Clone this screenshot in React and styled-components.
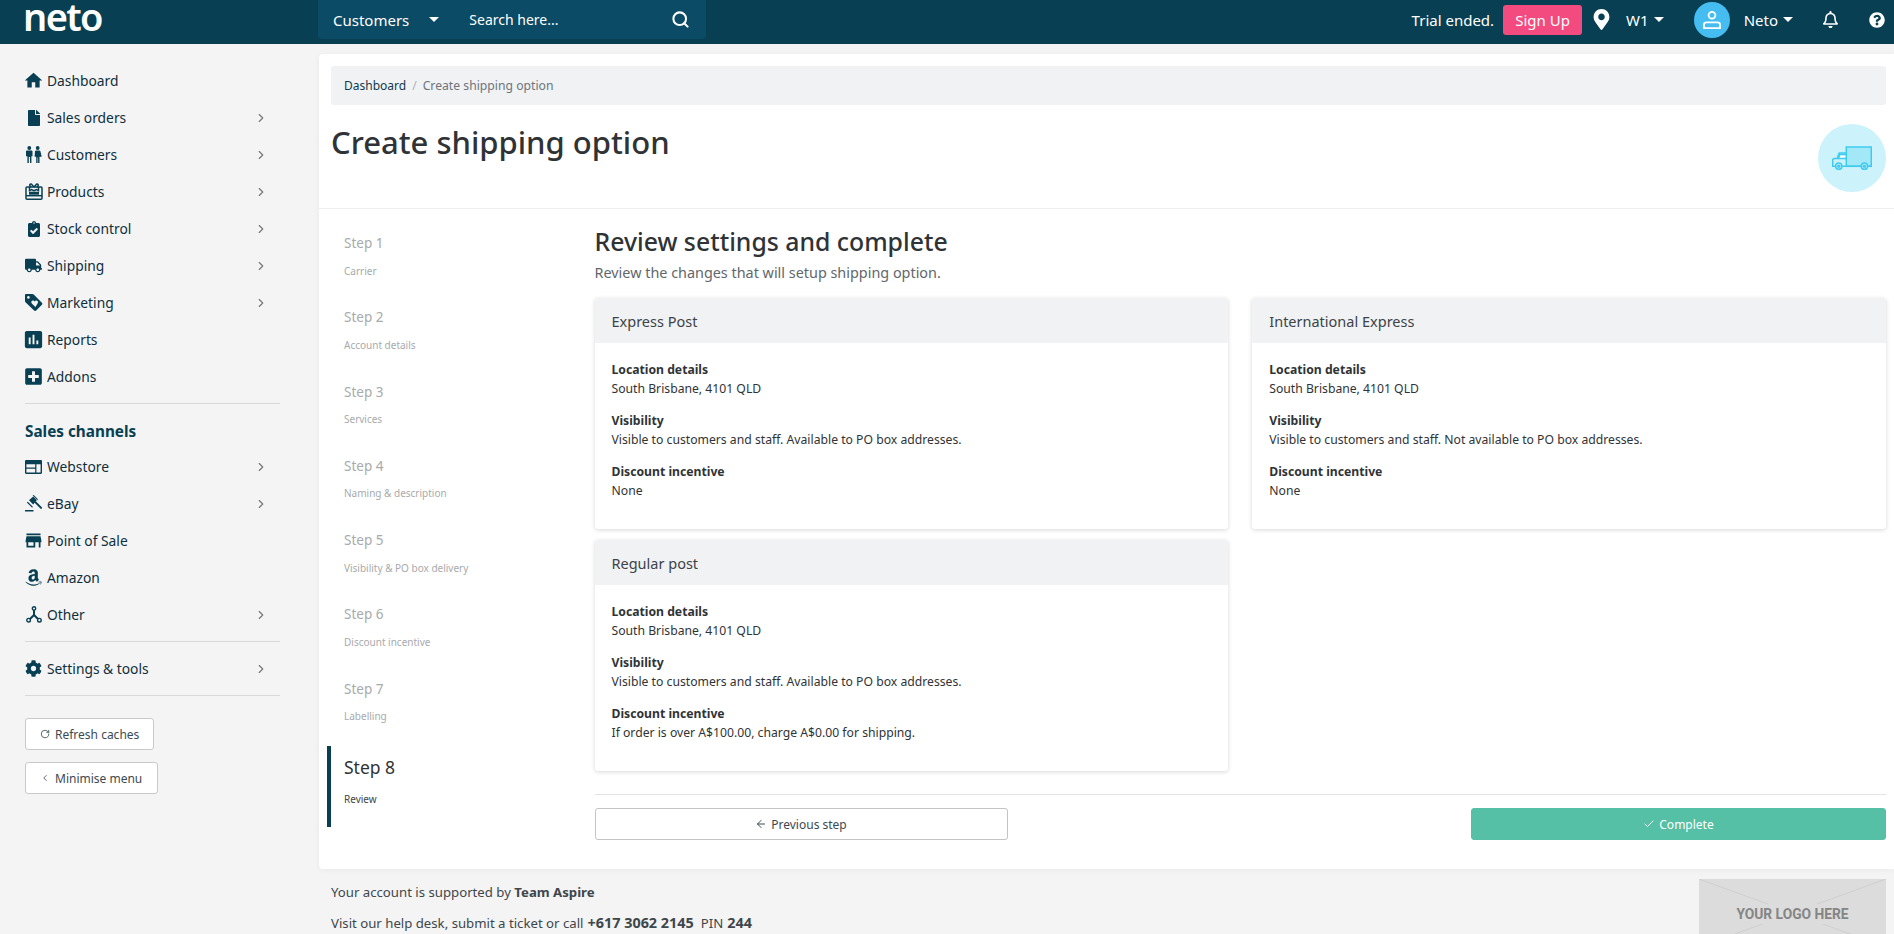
import React from "react";
import styled, { createGlobalStyle } from "styled-components";
import { FaFile, FaClipboardCheck, FaTruck, FaPlusSquare, FaAmazon, FaCog, FaMapMarkerAlt, FaRegBell, FaQuestionCircle } from "react-icons/fa";
import { MdAssessment, MdStore, MdHome } from "react-icons/md";
import { ChevronRight, ChevronLeft, Search, ArrowLeft, Check, RotateCw } from "lucide-react";

const GlobalStyle = createGlobalStyle`
  html, body {
    margin: 0;
    height: 100%;
    overflow: hidden;
    background: #f4f4f5;
    font-family: "Noto Sans", "Open Sans", sans-serif;
    color: #2f3336;
  }
  * { box-sizing: border-box; }
`;

const TopBar = styled.header`
  height: 44px;
  background: #083f53;
  color: #fff;
  display: flex;
  align-items: flex-start;
`;

const LogoBox = styled.div`
  width: 318px;
  padding-left: 23px;
  font-size: 38px;
  line-height: 33px;
  font-weight: 600;
  letter-spacing: -1.6px;
`;

const SearchBox = styled.div`
  width: 388px;
  height: 39px;
  background: #0b4b65;
  border-radius: 0 0 4px 4px;
  display: flex;
  align-items: center;
  padding: 0 16px 0 15px;
  font-size: 15px;
`;

const Caret = styled.span`
  display: inline-block;
  width: 0;
  height: 0;
  border-left: 5px solid transparent;
  border-right: 5px solid transparent;
  border-top: 5px solid #fff;
  margin-left: ${(p) => p.$gap || 5}px;
`;

const SearchHint = styled.span`
  margin-left: 30px;
  flex: 1;
  font-size: 14px;
`;

const SearchIcon = styled(Search)`
  stroke-width: 2.6;
`;

const TopRight = styled.div`
  margin-left: auto;
  height: 39px;
  display: flex;
  align-items: center;
  padding-right: 9px;
  font-size: 15px;
`;

const SignUp = styled.span`
  background: #f34b7f;
  border-radius: 3px;
  width: 79px;
  height: 30px;
  margin: 0 9px 0 9px;
  display: flex;
  align-items: center;
  justify-content: center;
`;

const Avatar = styled.span`
  width: 36px;
  height: 36px;
  border-radius: 50%;
  background: #45bdf0;
  margin: 0 14px 0 30px;
  display: flex;
  align-items: center;
  justify-content: center;
`;

const TopIcon = styled.span`
  display: flex;
  font-size: ${(p) => p.$size}px;
  margin: ${(p) => p.$margin};
`;

const Layout = styled.div`
  display: flex;
  align-items: flex-start;
`;

const Sidebar = styled.aside`
  width: 319px;
  flex: none;
  padding: 18px 39px 0 25px;
`;

const NavItem = styled.div`
  height: 37px;
  display: flex;
  align-items: center;
  font-size: 13.8px;
  color: #0f2f3c;
  padding-right: 12px;
`;

const NavIcon = styled.span`
  width: 17px;
  margin-right: 5px;
  color: #083f53;
  font-size: 17px;
  display: flex;
  justify-content: center;
  flex: none;

  svg {
    flex: none;
  }
`;

const NavLabel = styled.span`
  flex: 1;
`;

const Arrow = styled(ChevronRight)`
  color: #777;
`;

const SideRule = styled.hr`
  border: 0;
  border-top: 1px solid #d9d9d9;
  margin: ${(p) => p.$margin};
`;

const SideHeading = styled.div`
  font-size: 15.3px;
  line-height: 20px;
  font-weight: 700;
  color: #083f53;
  margin-bottom: 7px;
`;

const SideButton = styled.div`
  width: ${(p) => p.$width}px;
  height: 32px;
  margin-bottom: 12px;
  background: #fff;
  border: 1px solid #c9c9c9;
  border-radius: 3px;
  font-size: 12px;
  color: #3b4a52;
  display: flex;
  align-items: center;
  padding-left: 14px;
  gap: 5px;
`;

const Main = styled.main`
  flex: 1;
  min-width: 0;
  padding-top: 10px;
`;

const Panel = styled.div`
  background: #fff;
  border-radius: 4px 0 0 4px;
  box-shadow: 0 1px 6px rgba(0, 0, 0, 0.05);
  padding-bottom: 29px;
`;

const PanelHead = styled.div`
  padding: 12px 8px 16px 12px;
  border-bottom: 1px solid #eee;
`;

const Breadcrumb = styled.div`
  height: 39px;
  background: #f1f2f4;
  border-radius: 3px;
  padding: 0 13px;
  display: flex;
  align-items: center;
  font-size: 12.2px;
  color: #6c757d;
`;

const CrumbLink = styled.span`
  color: #0f3a4c;
  font-size: 12px;
`;

const CrumbSep = styled.span`
  margin: 0 6px;
  color: #adb2b7;
`;

const TitleRow = styled.div`
  margin-top: 19px;
  display: flex;
  justify-content: space-between;
`;

const PageTitle = styled.h1`
  margin: 0;
  font-size: 31px;
  line-height: 37px;
  font-weight: 500;
  color: #2f3336;
`;

const TruckBadge = styled.div`
  width: 68px;
  height: 68px;
  border-radius: 50%;
  background: #ccf2fb;
  display: flex;
  align-items: center;
  justify-content: center;
`;

const PanelBody = styled.div`
  display: flex;
  padding: 16px 8px 0 8px;
`;

const StepList = styled.div`
  width: 267.5px;
  flex: none;
`;

const Step = styled.div`
  border-left: 4px solid ${(p) => (p.$active ? "#083f53" : "transparent")};
  padding: ${(p) => (p.$active ? "9px 0 21px 13px" : "8px 0 21.8px 13px")};
  margin-top: ${(p) => (p.$active ? "1px" : "0")};
  width: ${(p) => (p.$active ? "200px" : "auto")};
`;

const StepName = styled.div`
  font-size: ${(p) => (p.$active ? 17.5 : 13.5)}px;
  line-height: ${(p) => (p.$active ? 24 : 20)}px;
  color: ${(p) => (p.$active ? "#2f3336" : "#a8aaac")};
`;

const StepNote = styled.div`
  font-size: 10px;
  line-height: 14px;
  margin-top: ${(p) => (p.$active ? 13 : 10.5)}px;
  color: ${(p) => (p.$active ? "#444" : "#a8aaac")};
`;

const Review = styled.div`
  flex: 1;
  min-width: 0;
`;

const ReviewTitle = styled.h2`
  margin: 0;
  font-size: 24.8px;
  line-height: 32px;
  font-weight: 500;
  color: #2f3336;
`;

const ReviewNote = styled.p`
  margin: 6px 0 15px;
  font-size: 14.4px;
  line-height: 20px;
  color: #62676b;
`;

const CardGrid = styled.div`
  display: grid;
  grid-template-columns: 1fr 1fr;
  gap: 11px 24px;
  align-items: start;
`;

const Card = styled.section`
  border-radius: 3px;
  box-shadow: 0 1px 4px rgba(0, 0, 0, 0.16);
  background: #fff;
`;

const CardHead = styled.div`
  height: 45px;
  background: #f1f2f4;
  border-radius: 3px 3px 0 0;
  padding: 0 17px;
  display: flex;
  align-items: center;
  font-size: 14.5px;
  color: #3d4347;
`;

const CardBody = styled.div`
  padding: 17px 17px 29px;
  font-size: 12.2px;
  line-height: 19px;
  color: #2f3336;
`;

const Fact = styled.div`
  & + & {
    margin-top: 13px;
  }
`;

const FactName = styled.div`
  font-weight: 700;
`;

const Actions = styled.div`
  margin-top: 23px;
  padding-top: 13px;
  border-top: 1px solid #e4e4e4;
  display: flex;
  justify-content: space-between;
`;

const ActionButton = styled.div`
  width: ${(p) => p.$width}px;
  height: 32px;
  border-radius: 3px;
  font-size: 12px;
  display: flex;
  align-items: center;
  justify-content: center;
  gap: 4px;
  background: ${(p) => (p.$primary ? "#55c0a6" : "#fff")};
  color: ${(p) => (p.$primary ? "#fff" : "#3b4a52")};
  border: 1px solid ${(p) => (p.$primary ? "#55c0a6" : "#c4c4c4")};
`;

const Footer = styled.footer`
  display: flex;
  justify-content: space-between;
  align-items: flex-start;
  padding: 10px 8px 0 12px;
  font-size: 13.2px;
  line-height: 20px;
  color: #40464a;
`;

const FooterText = styled.div`
  padding-top: 3px;
`;

const FooterLine = styled.div`
  & + & {
    margin-top: 11px;
  }
`;

const PhoneText = styled.b`
  font-size: 14.4px;
  margin-left: 4px;
`;

const PinLabel = styled.span`
  margin-left: 7px;
`;

const LogoSlot = styled.div`
  width: 187px;
  height: 68px;
  background: #dcdcdc;
  color: #858585;
  font-family: "Roboto", sans-serif;
  font-weight: 700;
  font-size: 13.8px;
  position: relative;
  display: flex;
  justify-content: center;
  padding-top: 25px;
  overflow: hidden;
`;

const LogoCross = styled.svg`
  position: absolute;
  inset: 0;
`;

const LogoWord = styled.span`
  position: relative;
  background: #dcdcdc;
  padding: 0 3px;
  height: 20px;
`;

const CustomersIcon = () => (
  <svg width="17" height="17" viewBox="0 0 17 17" fill="currentColor">
    <circle cx="4.3" cy="2" r="1.9" />
    <circle cx="12.7" cy="2" r="1.9" />
    <path d="M2 4.6h4.6c.6 0 .9.4.9 1v4.6H6.4V17H5V11H3.8v6H2.4v-6.8H1V5.6c0-.6.4-1 1-1z" />
    <path d="M11 4.6h3.4c.5 0 .8.3 1 .7l1.3 5.4h-2.2V17h-1.4v-5.5h-.5V17h-1.4v-6.3H9.6l.4-5.4c.2-.4.5-.7 1-.7z" />
  </svg>
);

const ProductsIcon = () => (
  <svg width="18" height="17" viewBox="0 0 18 17" fill="none" stroke="currentColor" strokeWidth="1.5">
    <rect x="1" y="4" width="16" height="12.2" rx="1" />
    <path d="M1 12.7h16" />
    <path d="M9 4L6.6 1.2C5.4.4 4.3 1.7 5 2.9L6.2 4M9 4l2.4-2.8c1.2-.8 2.3.5 1.6 1.7L11.8 4" />
    <path d="M4.5 4v3.6l2-1 2.5 1 2.5-1 2 1V4" />
    <path d="M4 10.2h10" strokeWidth="3" />
  </svg>
);

const MarketingIcon = () => (
  <svg width="18" height="17" viewBox="0 0 18 17">
    <path fill="currentColor" d="M1 0h6.4c.5 0 1 .2 1.3.5l8.2 8.2c.6.6.6 1.5 0 2.1l-5.7 5.7c-.6.6-1.5.6-2.1 0L.5 8.3C.2 8 0 7.5 0 7V1c0-.6.4-1 1-1z" />
    <circle cx="3.4" cy="3.4" r="1.3" fill="#f4f4f5" />
    <path fill="#f4f4f5" d="M10.4 13l-3.6-3.6c-1.5-1.7.6-3.9 2.4-2.4l.5.5.5-.5c1.7-1.3 3.8.9 2.4 2.4z" />
  </svg>
);

const WebstoreIcon = () => (
  <svg width="17" height="14" viewBox="0 0 17 14" fill="currentColor">
    <path fillRule="evenodd" d="M1.2 0h14.6c.7 0 1.2.5 1.2 1.2v11.6c0 .7-.5 1.2-1.2 1.2H1.2C.5 14 0 13.5 0 12.8V1.2C0 .5.5 0 1.2 0zM1.4 4.2v8.4h8.8V8.8H1.4V7.6h8.8V4.2zm10 0v8.4h4.2V4.2z" />
  </svg>
);

const GavelIcon = () => (
  <svg width="17" height="17" viewBox="0 0 17 17" fill="currentColor">
    <path d="M0 15h8.5v1.5H0z" />
    <path d="M7.6 .3l1.1-.3 4.2 4.2-.5 1.1z" />
    <path d="M4 5.2L8.2 1.6l3.6 3.6-3.6 4.2z" />
    <path d="M1.8 7.4l1-.6 5 5-.6 1z" />
    <path d="M9.4 7.6l1.4-1.4 6 6c.4.4.4 1 0 1.4-.4.4-1 .4-1.4 0z" />
  </svg>
);

const OtherIcon = () => (
  <svg width="16" height="17" viewBox="0 0 16 17" fill="none" stroke="currentColor">
    <path d="M8 4v5M8 9l-4.5 4.5M8 9l4.5 4.5" strokeWidth="2" />
    <circle cx="8" cy="2.4" r="1.7" strokeWidth="1.4" fill="#f4f4f5" />
    <circle cx="2.6" cy="14.2" r="1.8" strokeWidth="1.4" fill="#f4f4f5" />
    <circle cx="13.4" cy="14.2" r="1.8" strokeWidth="1.4" fill="#f4f4f5" />
  </svg>
);

const UserIcon = () => (
  <svg width="20" height="20" viewBox="0 0 20 20" fill="none" stroke="#fff" strokeWidth="1.8">
    <circle cx="10" cy="5.2" r="3.4" />
    <path d="M4.4 12.4h11.2c1.4 0 2.4 1 2.4 2.4v3.4H2v-3.4c0-1.4 1-2.4 2.4-2.4z" />
  </svg>
);

const TruckArt = () => (
  <svg width="40" height="24" viewBox="0 0 40 24" fill="none" stroke="#3ecbf0" strokeWidth="1.5">
    <rect x="14.3" y="1" width="25" height="19.3" fill="#a3e8f7" />
    <path d="M14.3 7H7.2L5.2 12.6H2.4C1.4 12.6.7 13.4.7 14.4v5.9h38.6" />
    <path d="M7.8 8.4h6.5v4.2H6.4z" fill="#fff" />
    <circle cx="6.8" cy="20.2" r="3.1" fill="#ccf2fb" />
    <circle cx="6.8" cy="20.2" r="1" />
    <circle cx="32.4" cy="20.2" r="3.1" fill="#ccf2fb" />
    <circle cx="32.4" cy="20.2" r="1" />
  </svg>
);

const mainNav = [
  { label: "Dashboard", icon: <MdHome size={21} /> },
  { label: "Sales orders", icon: <FaFile size={16} />, more: true },
  { label: "Customers", icon: <CustomersIcon />, more: true },
  { label: "Products", icon: <ProductsIcon />, more: true },
  { label: "Stock control", icon: <FaClipboardCheck size={16} />, more: true },
  { label: "Shipping", icon: <FaTruck />, more: true },
  { label: "Marketing", icon: <MarketingIcon />, more: true },
  { label: "Reports", icon: <MdAssessment size={23} /> },
  { label: "Addons", icon: <FaPlusSquare size={19} /> },
];

const channelNav = [
  { label: "Webstore", icon: <WebstoreIcon />, more: true },
  { label: "eBay", icon: <GavelIcon />, more: true },
  { label: "Point of Sale", icon: <MdStore size={21} /> },
  { label: "Amazon", icon: <FaAmazon size={19} /> },
  { label: "Other", icon: <OtherIcon />, more: true },
];

const steps = [
  ["Step 1", "Carrier"],
  ["Step 2", "Account details"],
  ["Step 3", "Services"],
  ["Step 4", "Naming & description"],
  ["Step 5", "Visibility & PO box delivery"],
  ["Step 6", "Discount incentive"],
  ["Step 7", "Labelling"],
];

const cards = [
  { title: "Express Post", visibility: "Visible to customers and staff. Available to PO box addresses.", discount: "None" },
  { title: "International Express", visibility: "Visible to customers and staff. Not available to PO box addresses.", discount: "None" },
  { title: "Regular post", visibility: "Visible to customers and staff. Available to PO box addresses.", discount: "If order is over A$100.00, charge A$0.00 for shipping." },
];

const NavRow = ({ item }) => (
  <NavItem>
    <NavIcon>{item.icon}</NavIcon>
    <NavLabel>{item.label}</NavLabel>
    {item.more && <Arrow size={14} />}
  </NavItem>
);

const App = () => {
  return (
    <>
      <GlobalStyle />
      <TopBar>
        <LogoBox>neto</LogoBox>
        <SearchBox>
          <span>Customers</span>
          <Caret $gap={20} />
          <SearchHint>Search here...</SearchHint>
          <SearchIcon size={19} />
        </SearchBox>
        <TopRight>
          <span>Trial ended.</span>
          <SignUp>Sign Up</SignUp>
          <TopIcon $size={21} $margin="0 14px 0 0"><FaMapMarkerAlt /></TopIcon>
          <span>W1</span>
          <Caret />
          <Avatar><UserIcon /></Avatar>
          <span>Neto</span>
          <Caret />
          <TopIcon $size={17} $margin="0 0 0 29px"><FaRegBell /></TopIcon>
          <TopIcon $size={16} $margin="0 0 0 30px"><FaQuestionCircle /></TopIcon>
        </TopRight>
      </TopBar>
      <Layout>
        <Sidebar>
          {mainNav.map((item) => <NavRow key={item.label} item={item} />)}
          <SideRule $margin="8px 0 17px" />
          <SideHeading>Sales channels</SideHeading>
          {channelNav.map((item) => <NavRow key={item.label} item={item} />)}
          <SideRule $margin="8px 0 8px" />
          <NavRow item={{ label: "Settings & tools", icon: <FaCog />, more: true }} />
          <SideRule $margin="8px 0 22px" />
          <SideButton $width={129}><RotateCw size={10} />Refresh caches</SideButton>
          <SideButton $width={133}><ChevronLeft size={10} />Minimise menu</SideButton>
        </Sidebar>
        <Main>
          <Panel>
            <PanelHead>
              <Breadcrumb>
                <CrumbLink>Dashboard</CrumbLink>
                <CrumbSep>/</CrumbSep>
                Create shipping option
              </Breadcrumb>
              <TitleRow>
                <PageTitle>Create shipping option</PageTitle>
                <TruckBadge><TruckArt /></TruckBadge>
              </TitleRow>
            </PanelHead>
            <PanelBody>
              <StepList>
                {steps.map(([name, note]) => (
                  <Step key={name}>
                    <StepName>{name}</StepName>
                    <StepNote>{note}</StepNote>
                  </Step>
                ))}
                <Step $active>
                  <StepName $active>Step 8</StepName>
                  <StepNote $active>Review</StepNote>
                </Step>
              </StepList>
              <Review>
                <ReviewTitle>Review settings and complete</ReviewTitle>
                <ReviewNote>Review the changes that will setup shipping option.</ReviewNote>
                <CardGrid>
                  {cards.map((card) => (
                    <Card key={card.title}>
                      <CardHead>{card.title}</CardHead>
                      <CardBody>
                        <Fact>
                          <FactName>Location details</FactName>
                          South Brisbane, 4101 QLD
                        </Fact>
                        <Fact>
                          <FactName>Visibility</FactName>
                          {card.visibility}
                        </Fact>
                        <Fact>
                          <FactName>Discount incentive</FactName>
                          {card.discount}
                        </Fact>
                      </CardBody>
                    </Card>
                  ))}
                </CardGrid>
                <Actions>
                  <ActionButton $width={413}><ArrowLeft size={12} />Previous step</ActionButton>
                  <ActionButton $width={415} $primary><Check size={12} />Complete</ActionButton>
                </Actions>
              </Review>
            </PanelBody>
          </Panel>
          <Footer>
            <FooterText>
              <FooterLine>Your account is supported by <b>Team Aspire</b></FooterLine>
              <FooterLine>Visit our help desk, submit a ticket or call<PhoneText>+617 3062 2145</PhoneText><PinLabel>PIN</PinLabel><PhoneText>244</PhoneText></FooterLine>
            </FooterText>
            <LogoSlot>
              <LogoCross width="187" height="68" viewBox="0 0 187 68" stroke="#cfcfcf" fill="none">
                <path d="M0 0L187 68M187 0L0 68" />
              </LogoCross>
              <LogoWord>YOUR LOGO HERE</LogoWord>
            </LogoSlot>
          </Footer>
        </Main>
      </Layout>
    </>
  );
};

export default App;
